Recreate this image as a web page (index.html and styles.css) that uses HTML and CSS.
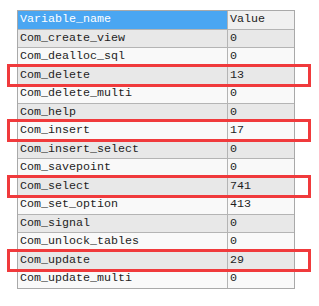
FILE: index.html
```html
<!DOCTYPE html>
<html>
<head>
<meta charset="utf-8">
<link rel="stylesheet" href="styles.css">
</head>
<body>
<div class="page">
  <div class="grid">
    <div class="row head"><div class="c name">Variable_name</div><div class="c val">Value</div></div>
    <div class="row odd"><div class="c name">Com_create_view</div><div class="c val">0</div></div>
    <div class="row even"><div class="c name">Com_dealloc_sql</div><div class="c val">0</div></div>
    <div class="row odd hl"><div class="c name">Com_delete</div><div class="c val">13</div></div>
    <div class="row even"><div class="c name">Com_delete_multi</div><div class="c val">0</div></div>
    <div class="row odd"><div class="c name">Com_help</div><div class="c val">0</div></div>
    <div class="row even hl"><div class="c name">Com_insert</div><div class="c val">17</div></div>
    <div class="row odd"><div class="c name">Com_insert_select</div><div class="c val">0</div></div>
    <div class="row even"><div class="c name">Com_savepoint</div><div class="c val">0</div></div>
    <div class="row odd hl"><div class="c name">Com_select</div><div class="c val">741</div></div>
    <div class="row even"><div class="c name">Com_set_option</div><div class="c val">413</div></div>
    <div class="row odd"><div class="c name">Com_signal</div><div class="c val">0</div></div>
    <div class="row even"><div class="c name">Com_unlock_tables</div><div class="c val">0</div></div>
    <div class="row odd hl"><div class="c name">Com_update</div><div class="c val">29</div></div>
    <div class="row even last"><div class="c name">Com_update_multi</div><div class="c val">0</div></div>
  </div>
</div>
</body>
</html>
```
FILE: styles.css
```css
html, body {
  margin: 0;
  background: #ffffff;
}
body {
  font-family: "Liberation Mono", "Courier New", monospace;
  font-size: 11.67px;
  color: #1e1e1e;
}
.page {
  padding: 10px 0 0 17px;
}
.grid {
  display: flex;
  flex-direction: column;
  width: 276px;
  border: 1px solid #a9a9a9;
}
.row {
  display: flex;
  height: 17.5px;
  border-bottom: 1px solid #b4b4b4;
}
.row.last {
  border-bottom: none;
}
.c {
  line-height: 17.5px;
  padding-left: 2px;
  white-space: nowrap;
  box-sizing: border-box;
}
.name {
  width: 210px;
  border-right: 1px solid #b4b4b4;
}
.val {
  width: 66px;
}
.head .name {
  background: #4aa6f2;
  color: #ffffff;
}
.head .val {
  background: #f0f0f0;
}
.odd {
  background: #e8e8e8;
}
.even {
  background: #f9f9f9;
}
.hl {
  position: relative;
}
.hl::after {
  content: "";
  position: absolute;
  left: -11px;
  top: -3px;
  width: 304px;
  height: 23px;
  box-sizing: border-box;
  border: 3px solid #f03a3c;
  pointer-events: none;
}
```
